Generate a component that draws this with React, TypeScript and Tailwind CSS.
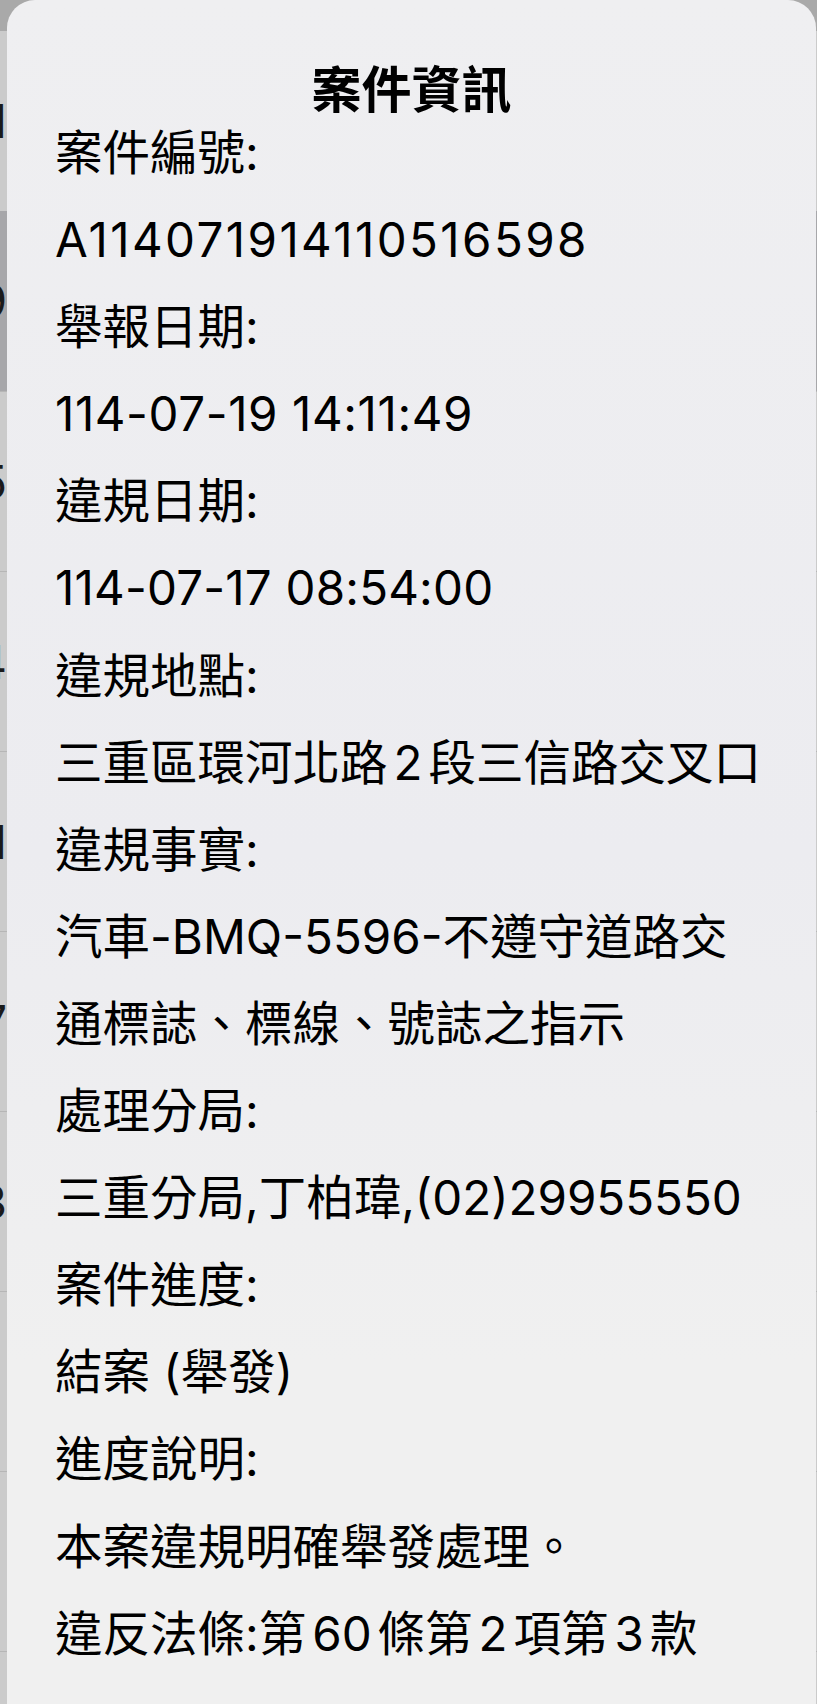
import type { ReactNode } from 'react';

// rows of the list page behind the sheet; only a sliver shows at the left edge
const BG_ROWS = [
  { glyph: '1', selected: false },
  { glyph: '9', selected: true },
  { glyph: '5', selected: false },
  { glyph: '4', selected: false },
  { glyph: '1', selected: false },
  { glyph: '7', selected: false },
  { glyph: '3', selected: false },
  { glyph: '', selected: false },
  { glyph: '', selected: false },
  { glyph: '', selected: false },
];

function Num({ children }: { children: ReactNode }) {
  return <span className="mx-[6px]">{children}</span>;
}

const LINES: { text: ReactNode; cls?: string }[] = [
  { text: '案件編號:' },
  { text: 'A114071914110516598', cls: 'tracking-[2.4px]' },
  { text: '舉報日期:' },
  { text: '114-07-19 14:11:49', cls: 'tracking-[0.6px]' },
  { text: '違規日期:' },
  { text: '114-07-17 08:54:00', cls: 'tracking-[0.2px]' },
  { text: '違規地點:' },
  { text: <>三重區環河北路<Num>2</Num>段三信路交叉口</> },
  { text: '違規事實:' },
  { text: '汽車-BMQ-5596-不遵守道路交' },
  { text: '通標誌、標線、號誌之指示' },
  { text: '處理分局:' },
  { text: '三重分局,丁柏瑋,(02)29955550' },
  { text: '案件進度:' },
  { text: '結案 (舉發)' },
  { text: '進度說明:' },
  { text: '本案違規明確舉發處理。' },
  { text: <>違反法條:第<Num>60</Num>條第<Num>2</Num>項第<Num>3</Num>款</> },
];

export default function App() {
  return (
    <div className="relative h-[1704px] w-full overflow-hidden bg-[#cbcbcb] font-['Inter','Noto_Sans_CJK_TC',sans-serif]">
      {/* dimmed list behind */}
      <div className="flex flex-col">
        <div className="h-[31px] bg-[#a9a9a9]" />
        {BG_ROWS.map((row, i) => (
          <div
            key={i}
            className={
              'flex h-[180px] items-center ' +
              (row.selected ? 'bg-[#a7a7aa]' : 'bg-[#cbcbcb]') +
              (i > 1 ? ' border-t border-[#b6b6b6]' : '')
            }
          >
            <div className="flex w-[7px] justify-end overflow-hidden text-[46px] leading-none text-[#1a1a1a]">
              <span className="shrink-0">{row.glyph}</span>
            </div>
          </div>
        ))}
      </div>

      {/* sheet */}
      <div className="absolute top-0 right-[1px] bottom-0 left-[7px] rounded-t-[28px] bg-[linear-gradient(180deg,#efeff1_0%,#ececf0_50%,#f0f0f0_80%,#f0f0f0_100%)] pt-[71px] pl-[48px]">
        <h2 className="pr-[48px] text-center text-[50px] leading-[38px] font-bold text-black">
          案件資訊
        </h2>
        <div className="flex flex-col text-[47.5px] leading-[87.1px] text-black">
          {LINES.map((line, i) => (
            <div key={i} className={'whitespace-nowrap ' + (line.cls ?? '')}>
              {line.text}
            </div>
          ))}
        </div>
      </div>
    </div>
  );
}
